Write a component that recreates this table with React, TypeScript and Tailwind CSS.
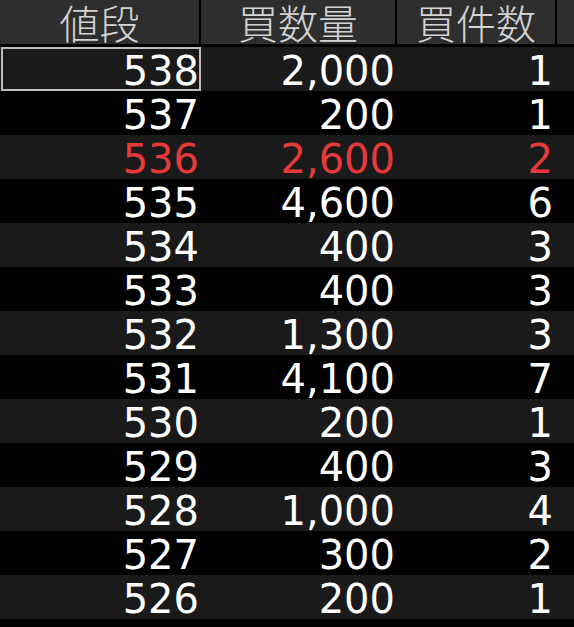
import React from 'react';

const rows = [
  { price: '538', qty: '2,000', count: '1' },
  { price: '537', qty: '200', count: '1' },
  { price: '536', qty: '2,600', count: '2', hot: true },
  { price: '535', qty: '4,600', count: '6' },
  { price: '534', qty: '400', count: '3' },
  { price: '533', qty: '400', count: '3' },
  { price: '532', qty: '1,300', count: '3' },
  { price: '531', qty: '4,100', count: '7' },
  { price: '530', qty: '200', count: '1' },
  { price: '529', qty: '400', count: '3' },
  { price: '528', qty: '1,000', count: '4' },
  { price: '527', qty: '300', count: '2' },
  { price: '526', qty: '200', count: '1' },
];

const headFont = { fontFamily: '"Noto Sans CJK JP", "Noto Sans", sans-serif' };
const numFont = { fontFamily: '"DejaVu Sans", sans-serif' };

export default function App() {
  return (
    <div className="w-[574px] h-[627px] bg-black overflow-hidden">
      {/* ヘッダー */}
      <div className="flex h-[44px] gap-[2px] text-[40px] font-light text-[#d4d4d4] leading-none" style={headFont}>
        <div className="w-[199px] bg-[#2e2e2e] flex items-end justify-center pb-[2px]">値段</div>
        <div className="w-[194px] bg-[#2e2e2e] flex items-end justify-center pb-[2px]">買数量</div>
        <div className="w-[158px] bg-[#2e2e2e] flex items-end justify-center pb-[2px]">買件数</div>
        <div className="flex-1 bg-[#2e2e2e]" />
      </div>

      {/* 板 */}
      <div className="mt-[3px] flex flex-col">
        {rows.map((r, i) => (
          <div
            key={r.price}
            className={`flex h-[44px] items-center text-[40px] leading-none ${i % 2 === 0 ? 'bg-[#1a1a1a]' : 'bg-black'} ${r.hot ? 'text-[#e63a3a]' : 'text-white'}`}
            style={numFont}
          >
            {i === 0 ? (
              <div className="ml-px w-[200px] h-[44px] border-2 border-[#bdbdbd] flex items-center justify-end pr-0 pt-[4px]">
                {r.price}
              </div>
            ) : (
              <div className="w-[201px] flex justify-end pr-[2px] pt-[4px]">{r.price}</div>
            )}
            <div className="w-[196px] flex justify-end pr-[2px] pt-[4px]">{r.qty}</div>
            <div className="w-[160px] flex justify-end pr-[4px] pt-[4px]">{r.count}</div>
          </div>
        ))}
      </div>
    </div>
  );
}
